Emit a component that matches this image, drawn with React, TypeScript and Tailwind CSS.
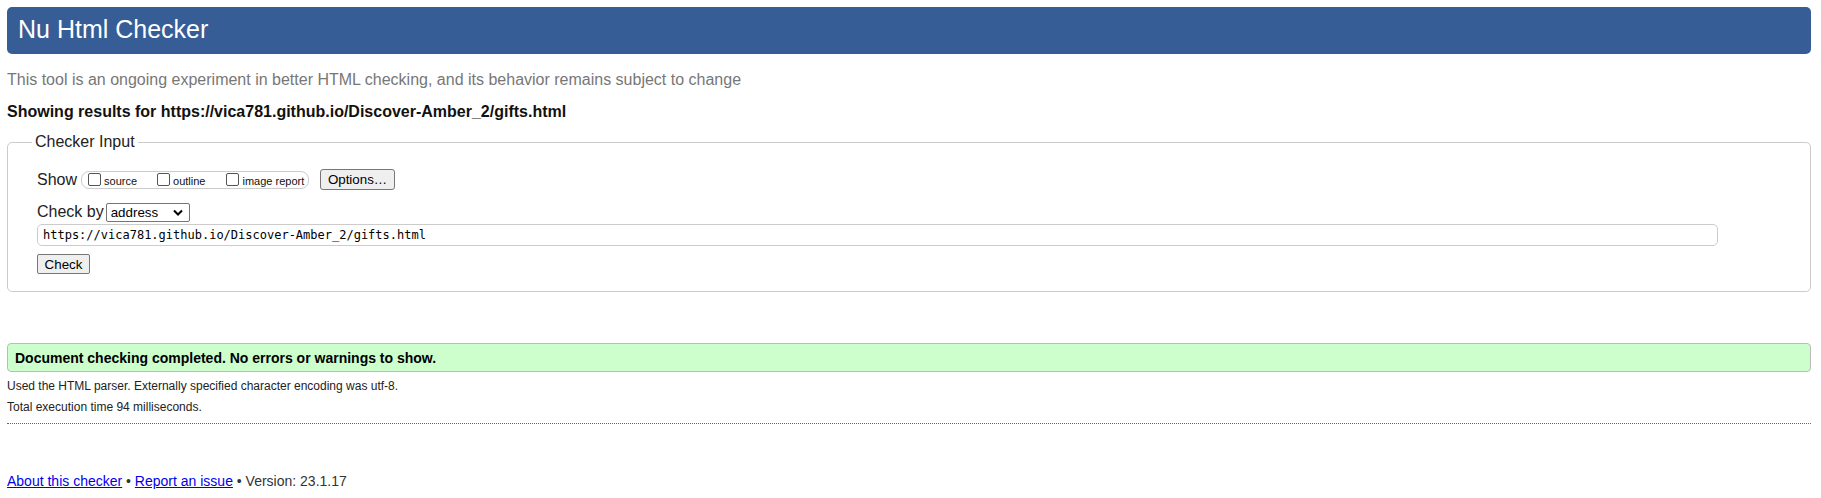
import React from "react";

function Box({ label, gapRight }: { label: string; gapRight: string }) {
  return (
    <span className={`flex items-center ${gapRight}`}>
      <span className="inline-block w-[13px] h-[13px] border border-[#555] rounded-[2px] bg-white" />
      <span className="ml-[3px] text-[11px] leading-[13px] text-[#111] mt-[3px]">{label}</span>
    </span>
  );
}

export default function App() {
  return (
    <div className="bg-white min-h-[498px] pl-[7px] pr-[10px] pt-[7px] text-black" style={{ fontFamily: '"Liberation Sans", Arial, sans-serif' }}>
      <div className="h-[47px] rounded-[5px] bg-[#365d95] flex items-center pl-[11px] pb-[4px]">
        <h1 className="text-[25px] leading-[28px] text-white font-normal">Nu Html Checker</h1>
      </div>
      <p className="mt-[17px] text-[16px] leading-[18px] text-[#777]">
        This tool is an ongoing experiment in better HTML checking, and its behavior remains subject to change
      </p>
      <p className="mt-[14px] text-[16px] leading-[18px] font-bold text-[#111]">
        Showing results for https://vica781.github.io/Discover-Amber_2/gifts.html
      </p>
      <fieldset className="mt-[12px] border border-[#ccc] rounded-[5px] pl-[24px] pr-[92px] pb-[17px]">
        <legend className="px-[3px] text-[16px] leading-[18px] text-[#222]">Checker Input</legend>
        <div className="pl-[5px]">
          <div className="mt-[18px] h-[21px] flex items-center">
            <span className="text-[16px] leading-[18px] text-[#222]">Show</span>
            <span className="ml-[4px] h-[18px] w-[228px] border border-[#ccc] rounded-[8px] flex items-center pl-[6px]">
              <Box label="source" gapRight="mr-[20px]" />
              <Box label="outline" gapRight="mr-[21px]" />
              <Box label="image report" gapRight="" />
            </span>
            <button className="ml-[11px] h-[21px] w-[75px] border border-[#767676] rounded-[3px] bg-[#efefef] text-[13.33px] leading-[15px] text-black flex items-center justify-center">
              Options…
            </button>
          </div>
          <div className="mt-[13px] h-[18px] flex items-center">
            <span className="text-[16px] leading-[18px] text-[#222]">Check by</span>
            <span className="ml-[2px] h-[19px] w-[84px] border border-[#767676] rounded-[2px] bg-white flex items-center pl-[4px] pr-[6px] justify-between">
              <span className="text-[13.33px] leading-[15px] text-black">address</span>
              <svg width="10" height="7" viewBox="0 0 10 7">
                <path d="M1 1.5 L5 5.5 L9 1.5" fill="none" stroke="#000" strokeWidth="2" />
              </svg>
            </span>
          </div>
          <div className="mt-[3px] h-[22px] w-full border border-[#ccc] rounded-[5px] flex items-center pl-[5px]">
            <span className="text-[12px] leading-[14px] text-black" style={{ fontFamily: '"DejaVu Sans Mono", "Liberation Mono", monospace' }}>
              https://vica781.github.io/Discover-Amber_2/gifts.html
            </span>
          </div>
          <button className="mt-[8px] h-[20px] w-[53px] border border-[#767676] rounded-[2px] bg-[#efefef] text-[13.33px] leading-[15px] text-black flex items-center justify-center">
            Check
          </button>
        </div>
      </fieldset>
      <div className="mt-[51px] h-[29px] border border-[#bbb] rounded-[4px] bg-[#ccffcc] flex items-center pl-[7px]">
        <span className="text-[14px] leading-[16px] font-bold text-black">Document checking completed. No errors or warnings to show.</span>
      </div>
      <p className="mt-[7px] text-[12px] leading-[14px] text-[#222]">Used the HTML parser. Externally specified character encoding was utf-8.</p>
      <p className="mt-[7px] text-[12px] leading-[14px] text-[#222]">Total execution time 94 milliseconds.</p>
      <div className="mt-[9px] border-t border-dotted border-[#666]" />
      <p className="mt-[49px] text-[14px] leading-[16px] text-[#333]">
        <a className="text-[#0000ee] underline" href="#">About this checker</a>
        {" • "}
        <a className="text-[#0000ee] underline" href="#">Report an issue</a>
        {" • Version: 23.1.17"}
      </p>
    </div>
  );
}
